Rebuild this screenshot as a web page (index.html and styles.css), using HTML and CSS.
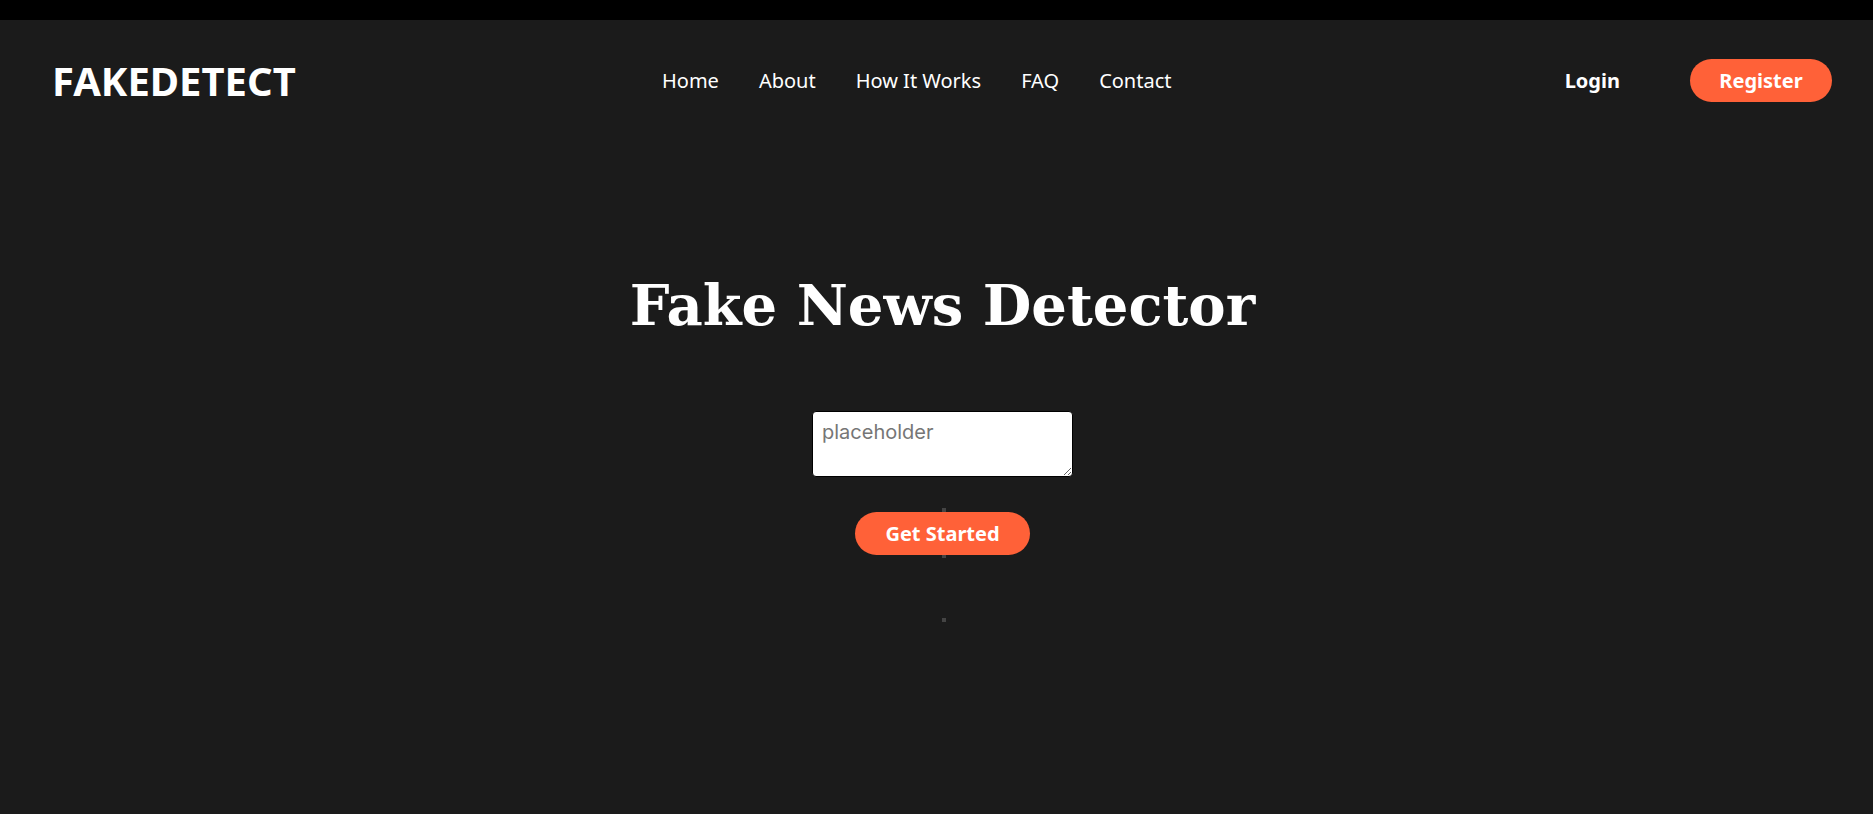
FILE: index.html
```html
<!DOCTYPE html>
<html lang="en">
<head>
<meta charset="utf-8">
<title>FakeDetect</title>
<link rel="stylesheet" href="styles.css">
</head>
<body>
<div class="topbar"></div>
<header class="header">
  <a class="logo" href="#">FAKEDETECT</a>
  <nav class="nav">
    <a href="#">Home</a>
    <a href="#">About</a>
    <a href="#">How It Works</a>
    <a href="#">FAQ</a>
    <a href="#">Contact</a>
  </nav>
  <div class="auth">
    <a class="login" href="#">Login</a>
    <a class="btn register" href="#">Register</a>
  </div>
</header>
<main class="hero">
  <h1 class="title">Fake News Detector</h1>
  <textarea class="input" placeholder="placeholder"></textarea>
  <div class="cta-wrap">
    <span class="guide"></span>
    <a class="btn cta" href="#">Get Started</a>
  </div>
  <span class="dot"></span>
</main>
</body>
</html>
```

FILE: styles.css
```css
* { box-sizing: border-box; }
html, body {
  margin: 0;
  padding: 0;
  background: #1b1b1b;
  height: 100%;
}
body {
  font-family: "Noto Sans", "Open Sans", sans-serif;
  color: #fff;
  overflow: hidden;
}
a { color: #fff; text-decoration: none; }

.topbar {
  height: 20px;
  background: #000;
}

.header {
  display: grid;
  grid-template-columns: 610px auto 1fr;
  align-items: center;
  height: 121px;
  padding: 0 41px 0 52px;
}
.logo {
  font-weight: 700;
  font-size: 40px;
  line-height: 1;
}
.nav {
  display: flex;
  gap: 40px;
  font-size: 20px;
}
.auth {
  justify-self: end;
  display: flex;
  align-items: center;
  gap: 70px;
}
.login {
  font-weight: 700;
  font-size: 20px;
}
.btn {
  display: inline-flex;
  align-items: center;
  justify-content: center;
  background: #ff6138;
  color: #fff;
  font-weight: 700;
  font-size: 20px;
  height: 43px;
  border-radius: 22px;
}
.register { width: 142px; }

.hero {
  display: flex;
  flex-direction: column;
  align-items: center;
  padding-top: 133px;
  padding-left: 12px;
}
.title {
  margin: 0;
  font-family: "DejaVu Serif", "Liberation Serif", serif;
  font-weight: 700;
  font-size: 56px;
  line-height: 62px;
}
.input {
  margin-top: 75px;
  width: 261px;
  height: 66px;
  border: 1px solid #000;
  border-radius: 4px;
  background: #fff;
  font-family: "Inter", "Roboto", sans-serif;
  font-size: 20px;
  padding: 8px 9px;
  color: #222;
}
.input::placeholder { color: #767676; }

.cta-wrap {
  position: relative;
  margin-top: 35px;
  display: flex;
}
.guide {
  position: absolute;
  left: 50%;
  top: -4px;
  bottom: -3px;
  width: 4px;
  margin-left: -1px;
  background: #444;
}
.cta {
  position: relative;
  width: 175px;
}
.dot {
  margin-top: 63px;
  width: 4px;
  height: 4px;
  margin-left: 2px;
  background: #444;
}
```
